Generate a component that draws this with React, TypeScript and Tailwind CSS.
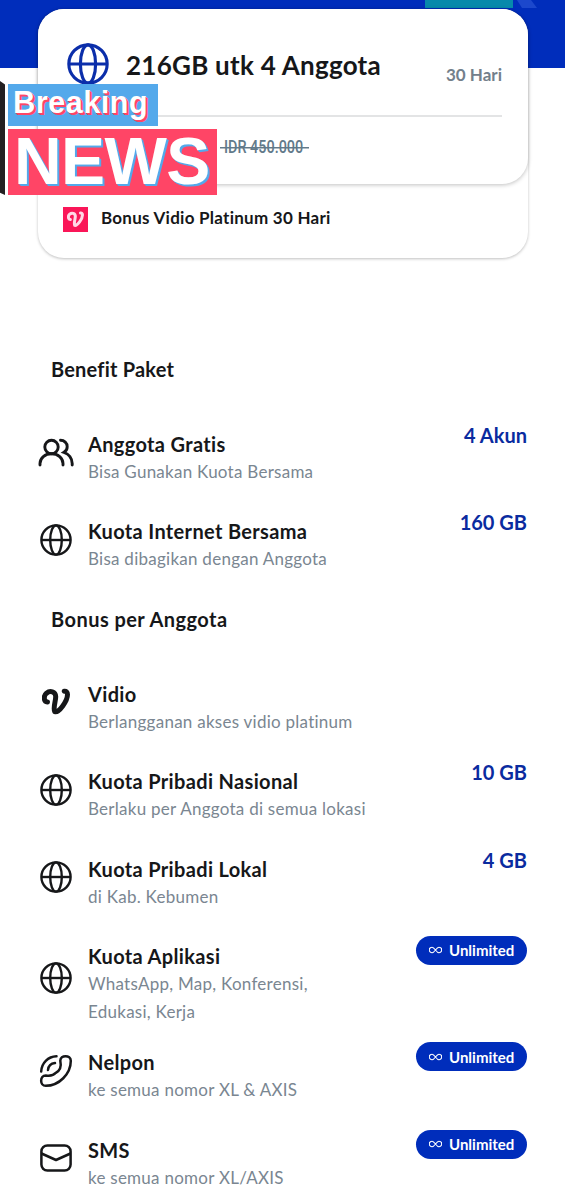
import type { ReactNode } from "react";

function GlobeIcon({ className }: { className: string }) {
  return (
    <svg viewBox="0 0 32 32" fill="none" stroke="currentColor" strokeWidth="2.4" className={className}>
      <circle cx="16" cy="16" r="14.6" />
      <ellipse cx="16" cy="16" rx="5.8" ry="14.6" />
      <path d="M1.4 16h29.2" />
    </svg>
  );
}

function UsersIcon() {
  return (
    <svg viewBox="0 0 36 30" fill="none" stroke="currentColor" strokeWidth="2.9" strokeLinecap="round" className="h-[30px] w-9">
      <circle cx="13.500" cy="9" r="6.700" />
      <path d="M2 27v-1.500C2 20 7 15.700 13.500 15.700S25 20 25 25.500V27" />
      <path d="M22.500 2.300c3.800 0 6.700 2.800 6.700 6.400 0 2.500-1.200 4.400-3.200 5.600 4.800 1.700 8.200 6.200 8.200 11.200V27" />
    </svg>
  );
}

function VidioIcon({ className }: { className: string }) {
  return (
    <svg viewBox="0 0 28 28" fill="none" stroke="currentColor" strokeWidth="5" strokeLinecap="round" strokeLinejoin="round" className={className}>
      <path d="M5.500 14C1.500 13.500 1.300 8 4.500 5.200 8 2.300 13.500 3.500 13.700 8.500c.2 4.500-3 11.500-.9 15.200C17 24.800 25.500 13 25.500 6.500c0-2.500-1.500-3.600-3.300-3.300" />
    </svg>
  );
}

function PhoneIcon() {
  return (
    <svg viewBox="0 0 32 32" fill="none" stroke="currentColor" strokeWidth="2.5" strokeLinecap="round" className="size-8 overflow-visible">
      <path d="M20.300 5.800c0-6.200 10.500-6.200 10.500 0C30.800 19 19 30.800 5.800 30.800c-6.200 0-6.200-10.300 0-10.300C12 21.500 14 20 15.800 17.800 20.500 15.500 21.500 11.500 20.300 5.800Z" />
      <path d="M1.200 16.500C1.500 8 8 1.500 16.500 1.200M8 15c.4-4 3-6.600 7-7" />
    </svg>
  );
}

function MailIcon() {
  return (
    <svg viewBox="0 0 32 28" fill="none" stroke="currentColor" strokeWidth="2.5" strokeLinejoin="round" className="h-7 w-8">
      <rect x="1.400" y="1.400" width="29.200" height="25.200" rx="6" />
      <path d="M1.500 9.500 16 16l14.500-6.500" />
    </svg>
  );
}

function Unlimited() {
  return (
    <span className="mt-[3px] flex h-[29px] w-[111px] items-center rounded-full bg-[#002dbb] pl-[13px] text-[15px] font-bold text-white">
      <svg viewBox="0 0 14 8" fill="none" stroke="currentColor" strokeWidth="1.200" className="mr-[7px] h-2 w-[13px]">
        <path d="M7 4C5.500 2 4.700 1 3.300 1a3 3 0 0 0 0 6C4.700 7 5.500 6 7 4s2.300-3 3.700-3a3 3 0 0 1 0 6C9.300 7 8.500 6 7 4Z" />
      </svg>
      Unlimited
    </span>
  );
}

type BenefitProps = {
  icon: ReactNode;
  title: string;
  children: ReactNode;
  value?: ReactNode;
  tall?: boolean;
};

function Benefit({ icon, title, children, value, tall }: BenefitProps) {
  return (
    <div className={tall ? "h-[106.500px]" : "h-[87.400px]"}>
      <div className="flex">
        <div className="mr-[14px] mb-[11px] flex w-9 items-center justify-center self-center">{icon}</div>
        <div className="flex-1 whitespace-nowrap">
          <h3 className="text-[20px] leading-7 font-bold tracking-[0.340px]">{title}</h3>
          <p className="text-[17px] leading-7 font-normal tracking-[0.260px] text-[#7a8691]">{children}</p>
        </div>
        <div className="-mt-[9px] text-[20px] leading-7 font-bold text-[#0a2b9f]">{value}</div>
      </div>
    </div>
  );
}

function BreakingSticker() {
  return (
    <div className="absolute top-[81px] left-0 font-['Liberation_Sans',sans-serif] font-bold text-white">
      <div className="absolute top-0 left-0 h-[114px] w-[5px] bg-[#242021] [clip-path:polygon(0_0,100%_3%,100%_100%,0_98%)]" />
      <div className="mt-[3px] ml-2 h-[42px] w-[150px] bg-[#54a9eb] pl-[5px] text-[31px] leading-[37px] tracking-[0.300px] [text-shadow:1px_1px_#ff4566,2px_2px_#ff4566]">
        Breaking
      </div>
      <div className="mt-[3px] ml-2 h-[66px] w-[209px] bg-[#ff4566] pl-[6px] text-[66px] leading-[64px] tracking-[-0.600px] [text-shadow:1px_1px_#54a9eb,2px_2px_#54a9eb]">
        NEWS
      </div>
    </div>
  );
}

export default function App() {
  return (
    <main className="relative h-[1200px] w-[565px] overflow-hidden bg-[linear-gradient(#002dbb_68px,#ffffff_68px)] pt-[9px] font-[Lato,sans-serif] text-[#161719]">
      <div className="absolute top-0 left-[425px] h-2 w-[88px] bg-[#0789ab]" />
      <div className="absolute top-0 left-[517px] h-2 w-5 bg-[#1c48cc] [clip-path:polygon(0_0,70%_0,100%_100%,25%_100%)]" />

      <section className="relative ml-[38px] h-[249px] w-[490px] rounded-[26px] bg-white shadow-[0_1px_3px_rgba(0,0,0,0.250)]">
        <div className="h-[175px] rounded-[26px] bg-white pr-[26px] pl-[25px] shadow-[0_1px_4px_rgba(0,0,0,0.250)]">
          <div className="flex h-[108px] items-center border-b-2 border-[#e3e4e5]">
            <GlobeIcon className="mt-1 ml-1 size-[42px] text-[#0b2eaa]" />
            <h1 className="mt-[6px] ml-[17px] text-[26px] font-bold tracking-[0.260px] whitespace-nowrap">216GB utk 4 Anggota</h1>
            <span className="mt-[25px] ml-auto text-[17px] font-bold text-[#73808b]">30 Hari</span>
          </div>
          <div className="mt-[18px] ml-[157px] h-6 w-[89px] bg-[linear-gradient(#627a8a,#627a8a)] bg-[length:100%_1.500px] bg-[position:0_12px] bg-no-repeat pl-1 text-[#627a8a]">
            <span className="inline-block origin-left scale-x-[0.8] font-[Roboto,sans-serif] text-[18px] leading-6 font-medium whitespace-nowrap">
              IDR 450.000
            </span>
          </div>
        </div>
        <div className="flex h-[70px] items-center pl-[25px]">
          <span className="flex size-[25px] items-center justify-center bg-[#fa1658] text-[#ffd8e6]">
            <VidioIcon className="size-[17px]" />
          </span>
          <span className="mb-[2px] ml-[13px] text-[17px] leading-6 font-bold tracking-[0.260px]">Bonus Vidio Platinum 30 Hari</span>
        </div>
      </section>

      <BreakingSticker />

      <section className="mx-[38px]">
        <h2 className="mt-[97px] mb-[47px] ml-[13px] text-[20px] leading-7 font-bold tracking-[0.200px]">Benefit Paket</h2>
        <Benefit icon={<UsersIcon />} title="Anggota Gratis" value="4 Akun">
          Bisa Gunakan Kuota Bersama
        </Benefit>
        <Benefit icon={<GlobeIcon className="size-8" />} title="Kuota Internet Bersama" value="160 GB">
          Bisa dibagikan dengan Anggota
        </Benefit>
        <h2 className="mb-[47px] ml-[13px] text-[20px] leading-7 font-bold tracking-[0.450px]">Bonus per Anggota</h2>
        <Benefit icon={<VidioIcon className="size-7" />} title="Vidio">
          Berlangganan akses vidio platinum
        </Benefit>
        <Benefit icon={<GlobeIcon className="size-8" />} title="Kuota Pribadi Nasional" value="10 GB">
          Berlaku per Anggota di semua lokasi
        </Benefit>
        <Benefit icon={<GlobeIcon className="size-8" />} title="Kuota Pribadi Lokal" value="4 GB">
          di Kab. Kebumen
        </Benefit>
        <Benefit icon={<GlobeIcon className="size-8" />} title="Kuota Aplikasi" value={<Unlimited />} tall>
          WhatsApp, Map, Konferensi,
          <br />
          Edukasi, Kerja
        </Benefit>
        <Benefit icon={<PhoneIcon />} title="Nelpon" value={<Unlimited />}>
          ke semua nomor XL &amp; AXIS
        </Benefit>
        <Benefit icon={<MailIcon />} title="SMS" value={<Unlimited />}>
          ke semua nomor XL/AXIS
        </Benefit>
      </section>
    </main>
  );
}
